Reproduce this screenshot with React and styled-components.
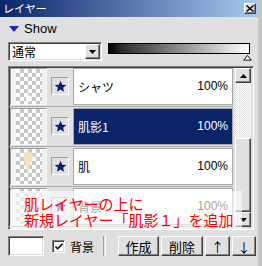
import styled, { createGlobalStyle } from 'styled-components'

const Global = createGlobalStyle`
  html, body { margin: 0; padding: 0; background: #e0e0e0; }
  body { font-family: "Noto Sans CJK JP", sans-serif; }
`

const raised = `
  box-sizing: border-box;
  background: #e0e0e0;
  border: 1px solid;
  border-color: #ffffff #404040 #404040 #ffffff;
  box-shadow: inset -1px -1px #808080;
`

const sunken = `
  box-sizing: border-box;
  border: 1px solid;
  border-color: #808080 #ffffff #ffffff #808080;
  box-shadow: inset 1px 1px #404040, inset -1px -1px #e0e0e0;
`

const Window = styled.div`
  position: relative;
  width: 262px;
  height: 266px;
  box-sizing: border-box;
  background: #e0e0e0;
  border-right: 4px solid #c4c4c4;
  display: flex;
  flex-direction: column;
  overflow: hidden;
`

const TitleBar = styled.div`
  height: 17px;
  flex: none;
  display: flex;
  align-items: center;
  padding: 0 2px 0 3px;
  background: linear-gradient(to right, #0a246a, #a6caf0);
  color: #fff;
  font-size: 11px;
  line-height: 17px;
`

const Title = styled.span`
  flex: 1;
`

const CloseBtn = styled.div`
  ${raised}
  width: 12px;
  height: 11px;
  display: flex;
  align-items: center;
  justify-content: center;
`

const ShowRow = styled.div`
  height: 23px;
  flex: none;
  display: flex;
  align-items: center;
  gap: 5px;
  padding-left: 9px;
  font-family: "Liberation Sans", sans-serif;
  font-size: 13px;
`

const Controls = styled.div`
  display: flex;
  gap: 6px;
  padding-left: 8px;
  margin-top: 2px;
  height: 19px;
  flex: none;
`

const Combo = styled.div`
  ${sunken}
  width: 94px;
  height: 19px;
  background: #fff;
  display: flex;
  align-items: center;
  padding: 0 1px 0 3px;
  font-size: 12px;
`

const ComboText = styled.span`
  flex: 1;
`

const ComboBtn = styled.div`
  ${raised}
  width: 15px;
  height: 15px;
  display: flex;
  align-items: center;
  justify-content: center;
`

const GradWrap = styled.div`
  width: 142px;
  display: flex;
  flex-direction: column;
  align-items: flex-end;
`

const GradBar = styled.div`
  box-sizing: border-box;
  width: 142px;
  height: 12px;
  margin-top: 1px;
  border: 1px solid #000;
  background: linear-gradient(to right, #000, #303030 10%, #fff);
`

const Marker = styled.svg`
  margin-top: 1px;
  margin-right: -2px;
`

const List = styled.div`
  ${sunken}
  margin: 5px 0 0 8px;
  width: 246px;
  height: 164px;
  flex: none;
  display: flex;
  gap: 2px;
`

const Rows = styled.div`
  width: 224px;
  height: 160px;
  overflow: hidden;
  display: flex;
  flex-direction: column;
`

const Row = styled.div`
  box-sizing: border-box;
  height: 40px;
  flex: none;
  display: flex;
  align-items: center;
  gap: 4px;
  padding: 1px 0 2px 1px;
  border-bottom: 1px solid #a8a8a8;
`

const Thumb = styled.div`
  box-sizing: border-box;
  width: 37px;
  height: 37px;
  border: 1px solid;
  border-color: #a0a0a0 #f8f8f8 #f8f8f8 #a0a0a0;
  background: #f2f2f2;
  display: flex;
  justify-content: center;
`

const Canvas = styled.div`
  position: relative;
  width: 26px;
  height: 35px;
  background: repeating-conic-gradient(#c8c8c8 0% 25%, #ffffff 0% 50%) 0 0 / 8px 8px;
`

const Art = styled.svg`
  position: absolute;
  left: 0;
  top: 0;
`

const Eye = styled.div`
  box-sizing: border-box;
  width: 18px;
  height: 18px;
  border: 1px solid;
  border-color: #a0a0a0 #ffffff #ffffff #a0a0a0;
  background: #e0e0e0;
  display: flex;
  align-items: center;
  justify-content: center;
`

const Name = styled.div`
  box-sizing: border-box;
  width: 160px;
  height: 37px;
  border: 1px solid #a8a8a8;
  background: ${p => (p.$sel ? '#0a246a' : '#fff')};
  color: ${p => (p.$sel ? '#fff' : '#000')};
  display: flex;
  align-items: center;
  justify-content: space-between;
  padding: 0 4px 0 4px;
  font-size: 12px;
`

const Pct = styled.span`
  font-family: "Liberation Sans", sans-serif;
  font-size: 12px;
`

const Scroll = styled.div`
  width: 16px;
  height: 159px;
  margin-top: 1px;
  display: flex;
  flex-direction: column;
`

const ScrollBtn = styled.div`
  ${raised}
  width: 16px;
  height: 15px;
  flex: none;
  display: flex;
  align-items: center;
  justify-content: center;
`

const Track = styled.div`
  flex: 1;
  background: repeating-conic-gradient(#ffffff 0% 25%, #e0e0e0 0% 50%) 0 0 / 2px 2px;
`

const Thumbbar = styled.div`
  ${raised}
  height: 74px;
  flex: none;
`

const Bottom = styled.div`
  display: flex;
  align-items: center;
  height: 20px;
  margin-top: 6px;
  padding-left: 8px;
  flex: none;
  font-size: 12px;
`

const ColorBox = styled.div`
  ${sunken}
  width: 36px;
  height: 20px;
  background: #fff;
`

const CheckGroup = styled.label`
  width: 51px;
  margin-left: 8px;
  display: flex;
  align-items: center;
  gap: 5px;
`

const Check = styled.div`
  ${sunken}
  width: 13px;
  height: 13px;
  background: #fff;
  display: flex;
  align-items: center;
  justify-content: center;
`

const Sep = styled.div`
  width: 1px;
  height: 20px;
  border-left: 1px solid #a0a0a0;
  border-right: 1px solid #fff;
`

const Buttons = styled.div`
  display: flex;
  gap: 2px;
  margin-left: 12px;
`

const Btn = styled.div`
  ${raised}
  width: ${p => p.$w}px;
  height: 20px;
  display: flex;
  align-items: center;
  justify-content: center;
  font-size: 13px;
`

const Note = styled.div`
  position: absolute;
  left: 10px;
  top: 191px;
  width: 232px;
  height: 38px;
  box-sizing: border-box;
  padding: 5px 0 0 14px;
  background: rgba(255, 255, 255, 0.62);
  color: #f00;
  font-size: 15px;
  line-height: 16px;
  white-space: nowrap;
`

const Star = () => (
  <svg width="13" height="13" viewBox="0 0 24 24">
    <path d="M12 1.5l3 7.2 7.6.6-5.8 5 1.8 7.5L12 17.7l-6.6 4.1 1.8-7.5-5.8-5 7.6-.6z" fill="#0a1a78" />
  </svg>
)

const layers = [
  { name: 'シャツ', art: 'shirt' },
  { name: '肌影1', sel: true },
  { name: '肌', art: 'skin' },
  { name: '背景' },
]

function LayerArt({ kind }) {
  if (kind === 'shirt')
    return (
      <Art width="26" height="35" viewBox="0 0 26 35">
        <path d="M12 27c2-1 4 0 4 2s-2 3-3 4c-1-1-3-1-3-3s1-2 2-3z" fill="#fff" />
      </Art>
    )
  if (kind === 'skin')
    return (
      <Art width="26" height="35" viewBox="0 0 26 35">
        <path d="M9 3c3-1 7 0 8 3s-2 6-3 9-1 7-2 11c-1-4-2-8-3-11S6 4 9 3z" fill="#f8e2bc" />
      </Art>
    )
  return null
}

export default function App() {
  return (
    <>
      <Global />
      <Window>
        <TitleBar>
          <Title>レイヤー</Title>
          <CloseBtn>
            <svg width="8" height="7" viewBox="0 0 8 7">
              <path d="M0.5 0.5l7 6M7.5 0.5l-7 6" stroke="#000" strokeWidth="1.4" />
            </svg>
          </CloseBtn>
        </TitleBar>
        <ShowRow>
          <svg width="10" height="6" viewBox="0 0 10 6">
            <path d="M0 0h10L5 6z" fill="#2020d0" />
          </svg>
          Show
        </ShowRow>
        <Controls>
          <Combo>
            <ComboText>通常</ComboText>
            <ComboBtn>
              <svg width="7" height="4" viewBox="0 0 7 4">
                <path d="M0 0h7L3.5 4z" fill="#000" />
              </svg>
            </ComboBtn>
          </Combo>
          <GradWrap>
            <GradBar />
            <Marker width="9" height="6" viewBox="0 0 9 6">
              <path d="M4.5 0.5L8.5 5.5H0.5z" fill="#fff" stroke="#000" />
            </Marker>
          </GradWrap>
        </Controls>
        <List>
          <Rows>
            {layers.map(l => (
              <Row key={l.name}>
                <Thumb>
                  <Canvas>
                    <LayerArt kind={l.art} />
                  </Canvas>
                </Thumb>
                <Eye>
                  <Star />
                </Eye>
                <Name $sel={l.sel}>
                  <span>{l.name}</span>
                  <Pct>100%</Pct>
                </Name>
              </Row>
            ))}
          </Rows>
          <Scroll>
            <ScrollBtn>
              <svg width="7" height="4" viewBox="0 0 7 4">
                <path d="M3.5 0L7 4H0z" fill="#000" />
              </svg>
            </ScrollBtn>
            <Track />
            <Thumbbar />
            <ScrollBtn>
              <svg width="7" height="4" viewBox="0 0 7 4">
                <path d="M0 0h7L3.5 4z" fill="#000" />
              </svg>
            </ScrollBtn>
          </Scroll>
        </List>
        <Bottom>
          <ColorBox />
          <CheckGroup>
            <Check>
              <svg width="8" height="7" viewBox="0 0 8 7">
                <path d="M0.5 3.5l2.2 2.2L7.5 0.8" stroke="#000" strokeWidth="1.6" fill="none" />
              </svg>
            </Check>
            背景
          </CheckGroup>
          <Sep />
          <Buttons>
            <Btn $w={41}>作成</Btn>
            <Btn $w={42}>削除</Btn>
            <Btn $w={25}>↑</Btn>
            <Btn $w={24}>↓</Btn>
          </Buttons>
        </Bottom>
        <Note>
          肌レイヤーの上に
          <br />
          新規レイヤー「肌影１」を追加
        </Note>
      </Window>
    </>
  )
}
